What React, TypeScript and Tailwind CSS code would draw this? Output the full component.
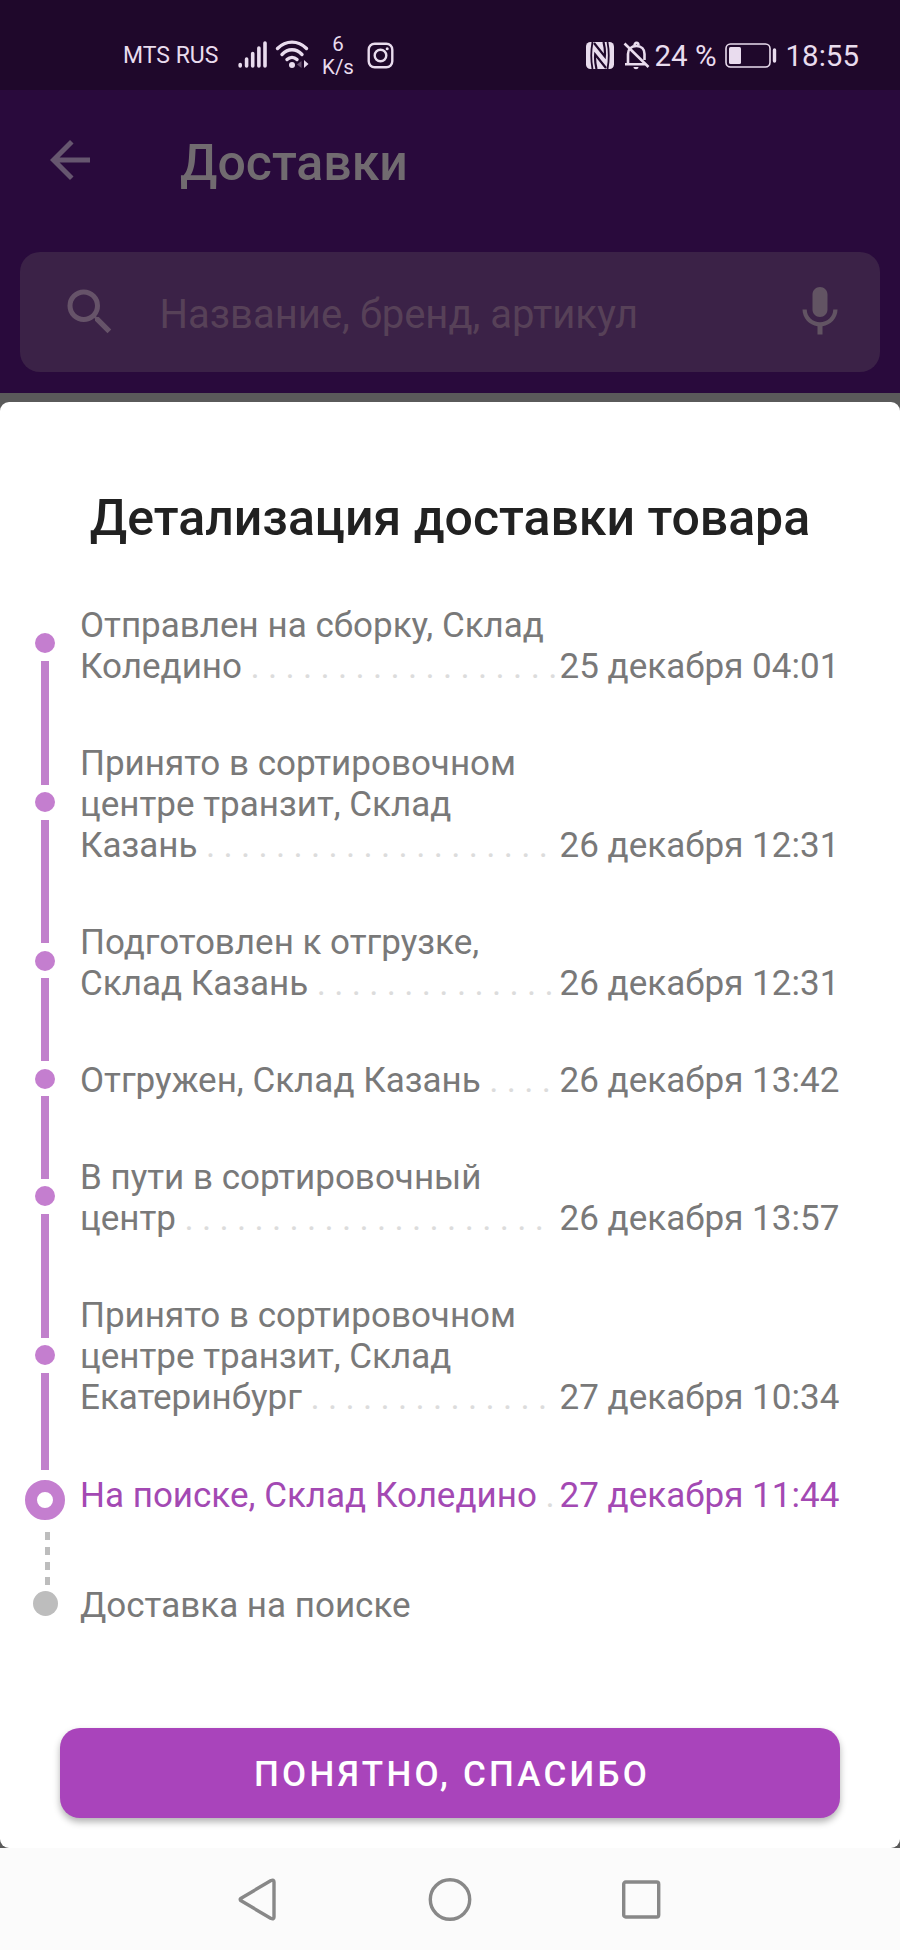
import React from 'react';
import { MdArrowBack, MdMic, MdSearch } from 'react-icons/md';

interface Step {
  lines: string[];
  dots: number;
  date: string;
  rail: string;
  active?: boolean;
}

const steps: Step[] = [
  { lines: ['Отправлен на сборку, Склад', 'Коледино'], dots: 18, date: '25 декабря 04:01', rail: 'h-[124.3px]' },
  { lines: ['Принято в сортировочном', 'центре транзит, Склад', 'Казань'], dots: 20, date: '26 декабря 12:31', rail: 'h-[123.5px]' },
  { lines: ['Подготовлен к отгрузке,', 'Склад Казань'], dots: 14, date: '26 декабря 12:31', rail: 'h-[83.2px]' },
  { lines: ['Отгружен, Склад Казань'], dots: 4, date: '26 декабря 13:42', rail: 'h-[82.5px]' },
  { lines: ['В пути в сортировочный', 'центр'], dots: 21, date: '26 декабря 13:57', rail: 'h-[124px]' },
  { lines: ['Принято в сортировочном', 'центре транзит, Склад', 'Екатеринбург'], dots: 14, date: '27 декабря 10:34', rail: 'h-[97px]' },
  { lines: ['На поиске, Склад Коледино'], dots: 1, date: '27 декабря 11:44', rail: '', active: true },
];

const StatusBar: React.FC = () => (
  <div className="h-[90px] bg-[#1f082b] text-[#e9dcee] flex items-start justify-between pl-[123px] pr-[41px]">
    <div className="flex items-start">
      <span className="w-[115px] pt-[42px] text-[23px] leading-[27px]">MTS RUS</span>
      <svg className="mt-[40px] w-[29px] h-[29px]" viewBox="0 0 29 29" stroke="currentColor" strokeWidth="3.6" strokeLinecap="round">
        <path d="M2.2 24.5v1.5M8.6 19v7M14.7 13.5V26M20.9 8v18M27 3v23" />
      </svg>
      <svg className="ml-[8px] mt-[39px] w-[34px] h-[30px]" viewBox="0 0 34 30" fill="none" stroke="currentColor" strokeWidth="3.4" strokeLinecap="round">
        <path d="M2.5 9.5C11 1 23 1 31.5 9.5M7 15.5C13 9.2 21 9.2 27 15.5M12 20.5C15 17.6 19 17.6 22 20.5" />
        <circle cx="17" cy="26" r="3" fill="currentColor" stroke="none" />
        <path d="M26.5 22v7l-4.5-3.5z" fill="#67506f" stroke="none" />
        <path d="M29 21v8l4.5-4z" fill="currentColor" stroke="none" />
      </svg>
      <div className="ml-[11px] mt-[33px] w-[36px] flex flex-col items-center text-[20.5px] leading-[23px]">
        <span>6</span>
        <span>K/s</span>
      </div>
      <svg className="ml-[11px] mt-[42px] w-[27px] h-[27px]" viewBox="0 0 27 27" fill="none" stroke="currentColor" strokeWidth="2.4">
        <rect x="1.7" y="1.7" width="23.6" height="23.6" rx="6" />
        <circle cx="13.5" cy="13.5" r="5.8" />
        <circle cx="20.2" cy="6.8" r="1.5" fill="currentColor" stroke="none" />
      </svg>
    </div>

    <div className="flex items-start">
      {/* NFC */}
      <svg className="mt-[42px] w-[28px] h-[27px]" viewBox="0 0 28 27">
        <rect width="28" height="27" rx="4.5" fill="currentColor" />
        <path d="M6.5 0C5 8 5 19 6.5 27M21.5 0C23 8 23 19 21.5 27" stroke="#1f082b" strokeWidth="1.8" fill="none" />
        <path d="M8 1L18.8 14.5C19.2 10 18.8 5 17.5 0M20 26L9.2 12.5C8.8 17 9.2 22 10.5 27" stroke="#1f082b" strokeWidth="2.2" fill="none" />
      </svg>
      <svg className="ml-[9px] mt-[41px] w-[27px] h-[29px]" viewBox="0 0 27 29" fill="none" stroke="currentColor" strokeWidth="2.6">
        <path d="M5 22.5V13C5 8 8.5 5 13.5 5S21.5 8 21.5 13v6" />
        <path d="M2 23.2h20M1.5 2.5L25.5 26M11.5 4.5c0-3.5 4-3.5 4 0" />
        <path d="M10.5 26h5c0 3-5 3-5 0z" fill="currentColor" stroke="none" />
      </svg>
      <span className="w-[75px] pl-[5px] pt-[39px] text-[29.5px] leading-[34px] whitespace-nowrap">24 %</span>
      <svg className="mt-[43px] w-[53px] h-[25px]" viewBox="0 0 53 25" fill="none" stroke="currentColor">
        <rect x="1" y="1" width="44" height="23" rx="4.5" strokeWidth="1.6" />
        <rect x="4" y="4" width="12" height="17" rx="1.5" fill="currentColor" stroke="none" />
        <path d="M49.5 7v11" strokeWidth="3.4" strokeLinecap="round" />
      </svg>
      <span className="ml-[8px] pt-[39px] text-[29.5px] leading-[34px]">18:55</span>
    </div>
  </div>
);

const Header: React.FC = () => (
  <div className="h-[302.5px] bg-[#290a3c]">
    <div className="flex h-[162px] pl-[40px] pt-[40px]">
      <MdArrowBack className="w-[60px] h-[60px] text-[#66566f]" />
      <h1 className="ml-[80px] mt-[4px] text-[50px] leading-[58px] font-medium text-[#716b70]">Доставки</h1>
    </div>
    <div className="mx-5 h-[120px] rounded-[20px] bg-[#3b2247] flex items-center pl-[40px] pr-[30px]">
      <MdSearch className="w-[60px] h-[60px] text-[#665369]" />
      <span className="ml-[39.5px] mt-[5px] flex-1 text-[40px] leading-[48px] text-[#574158]">Название, бренд, артикул</span>
      <MdMic className="w-[60px] h-[60px] text-[#625463]" />
    </div>
  </div>
);

const Rail: React.FC = () => (
  <div className="w-10 flex flex-col items-center">
    {steps.filter((s) => !s.active).map((step, i, arr) => (
      <React.Fragment key={i}>
        <div className="w-5 h-5 shrink-0 rounded-full bg-[#c47ecf]" />
        <div className={`mt-[7.5px] mr-[0.5px] w-[7.5px] shrink-0 bg-[#c180cc] ${step.rail} ${i === arr.length - 1 ? 'mb-[10px]' : 'mb-[7.5px]'}`} />
      </React.Fragment>
    ))}
    <div className="w-10 h-10 shrink-0 rounded-full border-[12px] border-[#c47ecf]" />
    <div className="mt-[12.5px] mb-[6.5px] ml-[5px] flex flex-col gap-[7.5px]">
      {[0, 1, 2, 3].map((n) => (
        <div key={n} className="w-[5px] h-[7.5px] bg-[#bdbdbd]" />
      ))}
    </div>
    <div className="w-[25px] h-[25px] shrink-0 rounded-full bg-[#bdbdbd]" />
  </div>
);

export default function App() {
  return (
    <div className="w-[900px] h-[1950px] overflow-hidden flex flex-col bg-[#5a5a5a] font-[Roboto,sans-serif]">
      <StatusBar />
      <Header />

      {/* Bottom sheet */}
      <div className="mt-[9px] h-[1446px] shrink-0 rounded-[9px] bg-white flex flex-col">
        <h2 className="mt-[87px] text-center text-[50px] leading-[58px] font-medium text-[#212121]">
          Детализация доставки товара
        </h2>

        <div className="mt-[57.5px] flex h-[1124px] pl-[25px]">
          <div className="pt-[29px]">
            <Rail />
          </div>
          <div className="ml-[15px] w-[765px] pt-[1px] flex flex-col text-[35px] leading-[41px] text-[#797979]">
            {steps.map((step, i) => (
              <div key={i} className={`flex items-end pb-[56.1px] ${step.active ? 'text-[#a349b3]' : ''}`}>
                <div className="w-[479.5px] whitespace-nowrap">
                  {step.lines.map((line, n) => (
                    <div key={line}>
                      {line}
                      {n === step.lines.length - 1 && (
                        <span className="text-[#dcdcdc] whitespace-pre tracking-[-0.2px]">{' .'.repeat(step.dots)}</span>
                      )}
                    </div>
                  ))}
                </div>
                <span className="whitespace-nowrap tracking-[0.03px]">{step.date}</span>
              </div>
            ))}
            <div className="mt-[13.4px]">Доставка на поиске</div>
          </div>
        </div>

        <button className="mx-[60px] h-[90px] pt-[2px] pl-[4px] rounded-[20px] bg-[#a944bb] text-white text-[35px] leading-[41px] font-medium tracking-[3.25px] shadow-[0_4px_7px_rgba(0,0,0,0.3)]">
          ПОНЯТНО, СПАСИБО
        </button>
      </div>

      {/* System navigation */}
      <div className="flex-1 bg-[#fbfbfb] flex items-start pl-[237px] pt-[29px] text-[#888888]">
        <svg className="w-[42px] h-[46px]" viewBox="0 0 42 46" fill="none" stroke="currentColor" strokeWidth="3.4" strokeLinejoin="round">
          <path d="M3.7 21.5Q2.8 22.5 3.7 23.5L34 41.5Q37 42.5 37 40V5Q37 2.5 34 3.5Z" />
        </svg>
        <svg className="ml-[148px] w-[46px] h-[46px]" viewBox="0 0 46 46" fill="none" stroke="currentColor" strokeWidth="3.4">
          <circle cx="23" cy="22.5" r="19.7" />
        </svg>
        <svg className="ml-[146px] w-[44px] h-[46px]" viewBox="0 0 44 46" fill="none" stroke="currentColor" strokeWidth="3.4">
          <rect x="4.7" y="5" width="35" height="35" rx="2" />
        </svg>
      </div>
    </div>
  );
}
